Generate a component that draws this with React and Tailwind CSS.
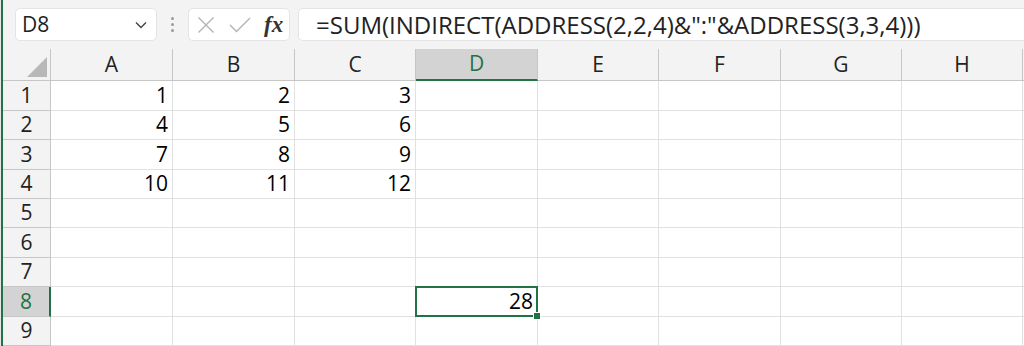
import React from 'react';

const cols = [
  { k: 'A', w: 'w-[122px]' },
  { k: 'B', w: 'w-[122px]' },
  { k: 'C', w: 'w-[121px]' },
  { k: 'D', w: 'w-[122px]' },
  { k: 'E', w: 'w-[121px]' },
  { k: 'F', w: 'w-[122px]' },
  { k: 'G', w: 'w-[121px]' },
  { k: 'H', w: 'w-[121px]' },
];

const data = {
  1: { A: 1, B: 2, C: 3 },
  2: { A: 4, B: 5, C: 6 },
  3: { A: 7, B: 8, C: 9 },
  4: { A: 10, B: 11, C: 12 },
  8: { D: 28 },
};

const rowH = ['h-[30px]', 'h-[29px]', 'h-[30px]', 'h-[29px]', 'h-[29px]', 'h-[30px]', 'h-[29px]', 'h-[30px]', 'h-[29px]'];

const font = { fontFamily: '"Open Sans", "Noto Sans", sans-serif' };

const Chevron = () => (
  <svg width="14" height="14" viewBox="0 0 14 14" fill="none">
    <path d="M2 4.5 L7 9.5 L12 4.5" stroke="#444" strokeWidth="1.4" />
  </svg>
);

const FormulaBar = () => (
  <div className="flex items-center h-[49px] pl-[12px]">
    <div className="flex items-center justify-between w-[142px] h-[33px] bg-white rounded-[5px] border border-[#e4e4e4] pl-[6px] pr-[8px] text-[21px] text-[#222]">
      <span>D8</span>
      <Chevron />
    </div>
    <div className="flex flex-col gap-[3px] w-[31px] items-center">
      <span className="w-[3px] h-[3px] bg-[#9a9a9a] rounded-full" />
      <span className="w-[3px] h-[3px] bg-[#9a9a9a] rounded-full" />
      <span className="w-[3px] h-[3px] bg-[#9a9a9a] rounded-full" />
    </div>
    <div className="flex items-center w-[102px] h-[33px] bg-white rounded-[5px] border border-[#e4e4e4] pl-[8px]">
      <svg width="18" height="18" viewBox="0 0 18 18" fill="none">
        <path d="M1.5 1.5 L16.5 16.5 M16.5 1.5 L1.5 16.5" stroke="#b3b3b3" strokeWidth="1.4" />
      </svg>
      <svg width="22" height="18" viewBox="0 0 22 18" fill="none" className="ml-[14px]">
        <path d="M1 9 L7.5 15.5 L21 2" stroke="#b3b3b3" strokeWidth="1.4" />
      </svg>
      <span className="ml-[13px] text-[23px] leading-none text-[#333] italic font-bold" style={{ fontFamily: '"Liberation Serif", serif' }}>
        fx
      </span>
    </div>
    <div className="flex items-center ml-[8px] flex-1 h-[33px] bg-white rounded-l-[5px] border border-r-0 border-[#e4e4e4] pl-[17px] text-[24px] text-[#222] whitespace-nowrap overflow-hidden">
      =SUM(INDIRECT(ADDRESS(2,2,4)&amp;":"&amp;ADDRESS(3,3,4)))
    </div>
  </div>
);

const Header = () => (
  <div className="flex h-[32px]">
    <div className="relative w-[48px] shrink-0 border-r border-b border-[#c6c6c6] bg-[#f3f3f3]">
      <div
        className="absolute right-[3px] bottom-[3px] w-[20px] h-[20px] bg-[#b8b8b8]"
        style={{ clipPath: 'polygon(100% 0, 100% 100%, 0 100%)' }}
      />
    </div>
    {cols.map((c) => (
      <div
        key={c.k}
        className={`${c.w} shrink-0 flex items-center justify-center text-[21px] border-r ${
          c.k === 'D'
            ? 'bg-[#d3d3d3] text-[#217346] border-b-2 border-b-[#217346] border-r-[#c6c6c6]'
            : 'bg-[#f3f3f3] text-[#222] border-b border-[#c6c6c6]'
        }`}
      >
        {c.k}
      </div>
    ))}
    <div className="flex-1 bg-[#f3f3f3] border-b border-[#c6c6c6]" />
  </div>
);

const Row = ({ n }) => {
  const sel = n === 8;
  return (
    <div className={`flex ${rowH[n - 1]}`}>
      <div
        className={`w-[48px] shrink-0 flex items-center justify-center text-[21px] border-b ${
          sel
            ? 'bg-[#d3d3d3] text-[#217346] border-r-2 border-r-[#217346] border-b-[#c6c6c6]'
            : 'bg-[#f3f3f3] text-[#222] border-r border-[#c6c6c6]'
        }`}
      >
        {n}
      </div>
      {cols.map((c) => {
        const v = data[n]?.[c.k];
        const active = sel && c.k === 'D';
        return (
          <div
            key={c.k}
            className={`${c.w} shrink-0 relative flex items-center justify-end pr-[4px] text-[21px] text-black border-r border-b border-[#e1e1e1] bg-white ${active ? 'z-10' : ''}`}
          >
            {active && (
              <div className="absolute -left-[1px] -top-[1px] -right-[1px] -bottom-[1px] border-2 border-[#217346]">
                <div className="absolute -right-[5px] -bottom-[5px] w-[8px] h-[8px] bg-[#217346] border border-white" />
              </div>
            )}
            {v !== undefined && <span className="relative">{v}</span>}
          </div>
        );
      })}
      <div className="flex-1 bg-white border-b border-[#e1e1e1]" />
    </div>
  );
};

export default function App() {
  return (
    <div className="flex w-[1024px] h-[346px] overflow-hidden bg-[#f3f3f3]" style={font}>
      <div className="w-[1px] shrink-0 bg-[#e6e6e6]" />
      <div className="w-[2px] shrink-0 bg-[#217346]" />
      <div className="flex-1 flex flex-col min-w-0">
        <FormulaBar />
        <Header />
        {[1, 2, 3, 4, 5, 6, 7, 8, 9].map((n) => (
          <Row key={n} n={n} />
        ))}
      </div>
    </div>
  );
}
